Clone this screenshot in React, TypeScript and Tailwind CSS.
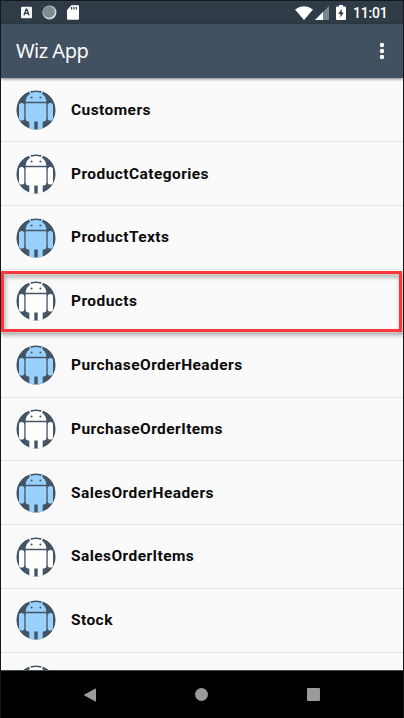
const rows = [
  'Customers',
  'ProductCategories',
  'ProductTexts',
  'Products',
  'PurchaseOrderHeaders',
  'PurchaseOrderItems',
  'SalesOrderHeaders',
  'SalesOrderItems',
  'Stock',
];

function AndroidAvatar({ color, id }: { color: string; id: string }) {
  return (
    <svg className="h-10 w-10 shrink-0" viewBox="0 0 40 40">
      <clipPath id={id}>
        <circle cx="20" cy="20" r="19.8" />
      </clipPath>
      <g clipPath={`url(#${id})`}>
        <circle cx="20" cy="20" r="19.7" fill="#425466" />
        <g fill={color}>
          <path d="M9.6 11.7C9.8 8 11.8 5 14.8 3.2Q20 .8 25.2 3.2C28.2 5 30.2 8 30.4 11.7Z" />
          <path d="M9.6 13.3H30.4V29a2.4 2.4 0 0 1-2.4 2.4H12A2.4 2.4 0 0 1 9.6 29Z" />
          <rect x="3" y="13" width="5.3" height="17.5" rx="2.6" />
          <rect x="31.7" y="13" width="5.3" height="17.5" rx="2.6" />
          <rect x="13.3" y="29" width="5" height="12" />
          <rect x="21.7" y="29" width="5" height="12" />
        </g>
        <path d="m12.3-.5 2.9 4.5M27.7-.5l-2.9 4.5" stroke={color} strokeWidth="1.6" />
        <circle cx="15.6" cy="7.5" r="1" fill="#425466" />
        <circle cx="24.4" cy="7.5" r="1" fill="#425466" />
      </g>
    </svg>
  );
}

function StatusBar() {
  return (
    <div className="flex h-[23px] shrink-0 items-center bg-[#2f3c47] pl-5 pr-[16px] text-white">
      <svg className="h-[13px] w-[11px]" viewBox="0 0 11 13">
        <rect y=".8" width="11" height="11.4" rx="1" fill="#f4f5f6" />
        <path d="m3 9.2 2.2-6h.6l2.2 6M3.9 7.3h3.2" fill="none" stroke="#2f3c47" strokeWidth="1.3" />
      </svg>
      <svg className="ml-[10px] h-[15px] w-[15px]" viewBox="0 0 15 15">
        <circle cx="7.5" cy="7.5" r="7" fill="#cfd3d5" />
        <circle cx="6.9" cy="6.9" r="5.9" fill="#7f898f" />
      </svg>
      <svg className="ml-[10px] h-[15px] w-3" viewBox="0 0 12 15">
        <path d="M4.5.3H11a1 1 0 0 1 1 1v12.4a1 1 0 0 1-1 1H1a1 1 0 0 1-1-1V5Z" fill="#fff" />
        <path d="M4.6 2v2.6M7 2v2.6M9.4 2v2.6" stroke="#2f3c47" strokeWidth="1.2" />
      </svg>
      <svg className="ml-auto h-[14px] w-[18px]" viewBox="0 0 18 14">
        <path d="M0 3.4Q9-2.8 18 3.4L9 14Z" fill="#fff" />
      </svg>
      <svg className="ml-[2px] h-[14px] w-[14px]" viewBox="0 0 14 14">
        <path d="M14 0v14H0Z" fill="#7b858c" />
        <path d="M8 6v8H0Z" fill="#fff" />
      </svg>
      <svg className="ml-[7px] h-[15px] w-[10px]" viewBox="0 0 10 15">
        <path d="M3 0h4v1.5h2a1 1 0 0 1 1 1V14a1 1 0 0 1-1 1H1a1 1 0 0 1-1-1V2.5a1 1 0 0 1 1-1h2Z" fill="#fff" />
        <path d="M5.7 3.8 2.3 9h2.2v3.5L7.7 7.5H5.7Z" fill="#2f3c47" />
      </svg>
      <span className="ml-[7px] w-[34px] whitespace-nowrap text-[14px] font-medium leading-[24px] tracking-[-0.2px] [font-family:Roboto,sans-serif]">11:01</span>
    </div>
  );
}

export default function App() {
  return (
    <div className="flex h-[718px] w-[404px] flex-col overflow-hidden border-x border-t border-[#151719] bg-[#fafafa]">
      <StatusBar />
      <header className="z-10 flex h-[54px] shrink-0 items-center justify-between bg-[#425161] pl-[15px] pr-[18px] shadow-[0_1px_3px_rgba(0,0,0,0.5)]">
        <h1 className="text-[20px] leading-[54px] tracking-[-0.5px] text-[#f8f9fa] [font-family:'Noto_Sans',sans-serif]">Wiz App</h1>
        <svg className="h-[18px] w-[6px]" viewBox="0 0 6 18" fill="#fff">
          <circle cx="3" cy="3" r="2.2" />
          <circle cx="3" cy="9" r="2.2" />
          <circle cx="3" cy="15" r="2.2" />
        </svg>
      </header>
      <main className="min-h-0 flex-1 overflow-hidden pt-[0.6px]">
        <ul>
          {rows.map((name, i) => (
            <li key={name} className="relative flex h-[63.8px] items-center border-b border-[#e7e7e7] pl-[15px]">
              <AndroidAvatar id={`avatar-${i}`} color={i % 2 === 0 ? '#99d1fb' : '#ffffff'} />
              <span className="ml-[15px] pt-px text-[15.5px] font-bold tracking-[0.43px] text-[#0b0b0b] [font-family:Roboto,sans-serif]">{name}</span>
              {name === 'Products' && (
                <div className="absolute left-0 right-px top-[1px] h-[61px] border-[3px] border-[#fb373b] drop-shadow-[1px_3px_2px_rgba(0,0,0,0.4)]" />
              )}
            </li>
          ))}
          <li className="flex h-[63.8px] items-center pl-[15px]">
            <AndroidAvatar id="avatar-last" color="#ffffff" />
          </li>
        </ul>
      </main>
      <nav className="flex h-12 shrink-0 items-center border-t border-[#424a48] bg-black pl-[83px]">
        <svg className="h-[14px] w-3" viewBox="0 0 12 14" fill="#9b9b9b">
          <path d="M11.5.4Q12 .4 12 1v12q0 .8-.7.4L.4 7.5Q-.2 7 .4 6.5Z" />
        </svg>
        <div className="ml-[99px] h-[13px] w-[13px] rounded-full bg-[#9b9b9b]" />
        <div className="ml-[99px] h-[13px] w-[13px] rounded-[1px] bg-[#9b9b9b]" />
      </nav>
    </div>
  );
}
